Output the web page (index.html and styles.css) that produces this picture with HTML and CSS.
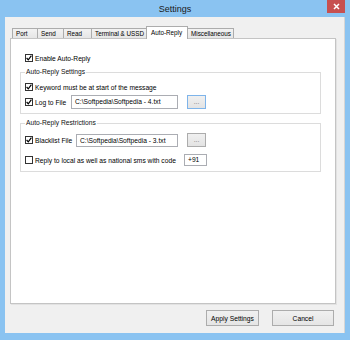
FILE: index.html
```html
<!DOCTYPE html>
<html lang="en">
<head>
    <meta charset="UTF-8">
    <title>Settings</title>
    <link rel="stylesheet" href="styles.css">
</head>
<body>
    <div class="window">
        <!-- Title bar -->
        <div class="titlebar">
            <span class="title">Settings</span>
            <span class="close">
                <svg width="7" height="7" viewBox="0 0 7 7"><path d="M1 1 L6 6 M6 1 L1 6" stroke="#fff" stroke-width="1.5"/></svg>
            </span>
        </div>

        <div class="client">
            <!-- Tabs -->
            <div class="tabs">
                <div class="tab tab-port">Port</div>
                <div class="tab tab-send">Send</div>
                <div class="tab tab-read">Read</div>
                <div class="tab tab-term">Terminal &amp; USSD</div>
                <div class="tab tab-auto active">Auto-Reply</div>
                <div class="tab tab-misc">Miscellaneous</div>
            </div>

            <!-- Auto-Reply page -->
            <div class="panel">
                <div class="row row-enable">
                    <span class="box checked"><svg width="6" height="6" viewBox="0 0 6 6"><path d="M0.6 3 L2.3 4.9 L5.4 0.7" fill="none" stroke="#000" stroke-width="1.2"/></svg></span>
                    <span>Enable Auto-Reply</span>
                </div>

                <fieldset class="group group-settings">
                    <legend>Auto-Reply Settings</legend>
                    <div class="row">
                        <span class="box checked"><svg width="6" height="6" viewBox="0 0 6 6"><path d="M0.6 3 L2.3 4.9 L5.4 0.7" fill="none" stroke="#000" stroke-width="1.2"/></svg></span>
                        <span>Keyword must be at start of the message</span>
                    </div>
                    <div class="row row-file">
                        <span class="box checked"><svg width="6" height="6" viewBox="0 0 6 6"><path d="M0.6 3 L2.3 4.9 L5.4 0.7" fill="none" stroke="#000" stroke-width="1.2"/></svg></span>
                        <span class="label label-log">Log to File</span>
                        <span class="field field-log">C:\Softpedia\Softpedia - 4.txt</span>
                        <span class="browse focused">...</span>
                    </div>
                </fieldset>

                <fieldset class="group group-restrict">
                    <legend>Auto-Reply Restrictions</legend>
                    <div class="row row-file">
                        <span class="box checked"><svg width="6" height="6" viewBox="0 0 6 6"><path d="M0.6 3 L2.3 4.9 L5.4 0.7" fill="none" stroke="#000" stroke-width="1.2"/></svg></span>
                        <span class="label label-black">Blacklist File</span>
                        <span class="field field-black">C:\Softpedia\Softpedia - 3.txt</span>
                        <span class="browse">...</span>
                    </div>
                    <div class="row row-code">
                        <span class="box"></span>
                        <span class="label label-reply">Reply to local as well as national sms with code</span>
                        <span class="field field-code">+91</span>
                    </div>
                </fieldset>
            </div>

            <!-- Dialog buttons -->
            <div class="actions">
                <button class="btn btn-apply">Apply Settings</button>
                <button class="btn btn-cancel">Cancel</button>
            </div>
        </div>
    </div>
</body>
</html>
```

FILE: styles.css
```css
body {
    margin: 0;
    font-family: "Liberation Sans", Arial, sans-serif;
    font-size: 6.7px;
    color: #000;
}
.window {
    width: 350px;
    height: 340px;
    box-sizing: border-box;
    background: #8ac3f1;
    padding: 0 5px 7px 5px;
    position: relative;
}

/* Title bar */
.titlebar {
    height: 17px;
    text-align: center;
}
.title {
    display: inline-block;
    padding-top: 1px;
    line-height: 17px;
    font-size: 9px;
    color: #1a1a1a;
}
.close {
    position: absolute;
    top: 0;
    right: 5px;
    width: 18px;
    height: 13px;
    background: #c75050;
    display: flex;
    align-items: center;
    justify-content: center;
}

/* Client area */
.client {
    height: 316px;
    background: #f0f0f0;
    border-right: 1px solid #d6d6d6;
    box-sizing: border-box;
}

/* Tabs */
.tabs {
    display: flex;
    align-items: flex-end;
    padding: 9px 0 0 7px;
    height: 21px;
    box-sizing: border-box;
}
.tab {
    height: 10px;
    line-height: 10px;
    padding-left: 3px;
    box-sizing: border-box;
    border: 1px solid #acacac;
    border-bottom: none;
    margin-right: -1px;
    background: linear-gradient(#f2f2f2, #e6e6e6);
    white-space: nowrap;
    font-size: 6.3px;
    overflow: hidden;
}
.tab-port { width: 26px; }
.tab-send { width: 27px; }
.tab-read { width: 29px; }
.tab-term { width: 56px; }
.tab-auto { width: 42px; }
.tab-misc { width: 47px; }
.tab.active {
    height: 13px;
    line-height: 11px;
    padding-left: 4px;
    margin-bottom: -1px;
    background: #fff;
    position: relative;
    z-index: 1;
}

/* Tab page */
.panel {
    margin: 0 8px 0 5px;
    height: 266px;
    box-sizing: border-box;
    background: #fff;
    border: 1px solid #c4c4c4;
    box-shadow: 1px 1px 0 #e2e2e2;
    padding-top: 13px;
}
.row {
    display: flex;
    align-items: center;
    height: 12px;
    white-space: nowrap;
}
.row-enable { padding-left: 14px; }
.box {
    width: 8px;
    height: 8px;
    box-sizing: border-box;
    border: 1px solid #333;
    background: #fff;
    margin-right: 2px;
    display: flex;
    align-items: center;
    justify-content: center;
}

/* Group boxes */
.group {
    margin: 4px 14px 0 9px;
    padding: 5px 4px 4px 4px;
    border: 1px solid #dcdcdc;
    min-width: 0;
}
.group legend {
    padding: 0 1px;
    margin-left: 0;
    line-height: 8px;
    color: #111;
}
.group-restrict {
    margin-top: 5px;
    padding-top: 6px;
    padding-bottom: 5px;
}
.row-file { height: 14px; margin-top: 2px; }
.group-restrict .row-file { margin-top: 0; }
.row-code { margin-top: 7px; }

.label { display: inline-block; }
.label-log { width: 36px; }
.label-black { width: 41px; }
.label-reply { width: 149px; }

.field {
    height: 14px;
    line-height: 12px;
    box-sizing: border-box;
    border: 1px solid #abadb3;
    background: #fff;
    padding-left: 3px;
}
.field-log { width: 107px; }
.field-black { width: 102px; height: 13px; line-height: 11px; }
.field-code { width: 23px; height: 12px; line-height: 10px; }

.browse {
    width: 19px;
    height: 14px;
    margin-left: 9px;
    box-sizing: border-box;
    border: 1px solid #acacac;
    background: linear-gradient(#f0f0f0, #e3e3e3);
    color: #777;
    text-align: center;
    line-height: 12px;
    font-size: 6.7px;
}
.browse.focused { border-color: #7eb4ea; }

/* Dialog buttons */
.actions {
    display: flex;
    justify-content: flex-end;
    gap: 13px;
    padding: 6px 10px 0 0;
}
.btn {
    height: 16px;
    padding: 0;
    font-family: inherit;
    font-size: 6.7px;
    color: #000;
    border: 1px solid #acacac;
    background: linear-gradient(#f0f0f0, #e5e5e5);
}
.btn-apply { width: 53px; }
.btn-cancel { width: 62px; }
```
